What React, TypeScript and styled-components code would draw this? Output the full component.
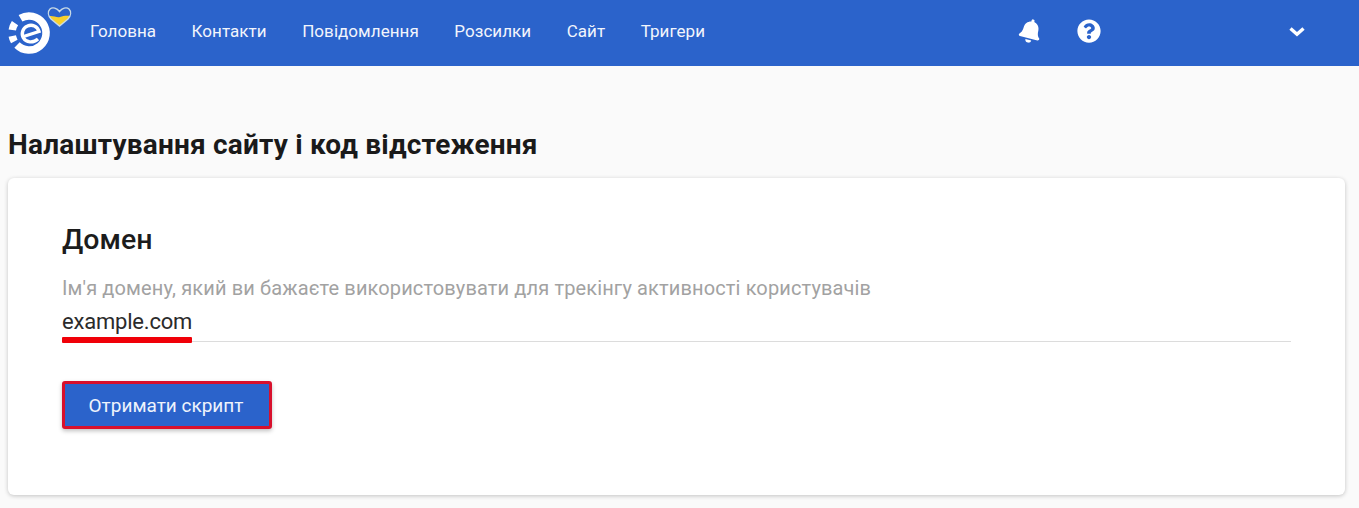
import React from "react";
import styled, {createGlobalStyle} from "styled-components";
import {FaBell} from "react-icons/fa";

const Global = createGlobalStyle`
    html, body {
        margin: 0;
        padding: 0;
        background-color: #fafafa;
        font-family: "Roboto", "Liberation Sans", sans-serif;
    }
    * {
        box-sizing: border-box;
    }
`;

const Page = styled.div`
    width: 1359px;
    height: 508px;
    overflow: hidden;
`;

const Header = styled.header`
    height: 66px;
    background-color: #2b63cb;
    display: flex;
    align-items: center;
    color: #fff;
    padding-bottom: 4px;
`;

const LogoBox = styled.div`
    width: 72px;
    height: 50px;
    margin-left: 8px;
`;

const Nav = styled.nav`
    display: flex;
    gap: 35.5px;
    margin-left: 10px;
    width: 929px;
`;

const NavLink = styled.a`
    font-size: 17px;
    font-weight: 400;
    letter-spacing: 0.05px;
    color: #f2f5fc;
`;

const IconSlot = styled.div<{$width: number}>`
    width: ${({$width}) => $width}px;
    display: flex;
    align-items: center;
`;

const BellIcon = styled(FaBell)`
    width: 23px;
    height: 24px;
    color: #fff;
    transform: rotate(14deg);
`;

const Main = styled.main`
    padding: 64px 14px 0 8px;
`;

const Title = styled.h1`
    margin: 0 0 18px;
    font-size: 28px;
    line-height: 30px;
    font-weight: 700;
    letter-spacing: 0.2px;
    color: #1a1a1a;
`;

const Card = styled.section`
    height: 317px;
    background-color: #fff;
    border-radius: 6px;
    box-shadow: 0 1px 4px rgba(0, 0, 0, 0.22);
    padding: 46px 54px 0;
`;

const CardTitle = styled.h2`
    margin: 0 0 20px;
    font-size: 28.5px;
    line-height: 32px;
    font-weight: 500;
    color: #1c1c1c;
`;

const Hint = styled.div`
    font-size: 20px;
    line-height: 24px;
    color: #a2a2a2;
    letter-spacing: 0.13px;
`;

const InputRow = styled.div`
    margin-top: 7px;
    height: 35px;
    border-bottom: 1px solid #dcdcdc;
    position: relative;
    font-size: 22px;
    letter-spacing: -0.2px;
    line-height: 30px;
    color: #2b2b2b;
`;

const InputValue = styled.span`
    display: inline-block;
    height: 35px;
    position: relative;
`;

const Underline = styled.span`
    position: absolute;
    left: 0;
    right: 0;
    bottom: -1px;
    height: 6px;
    background-color: #f00008;
    border-radius: 1px;
`;

const SubmitButton = styled.button`
    display: block;
    margin-top: 39px;
    width: 210px;
    height: 48px;
    background-color: #2b63cb;
    border: 3px solid #d8102c;
    border-radius: 3px;
    box-shadow: 0 2px 4px rgba(0, 0, 0, 0.25);
    color: #eef3fc;
    font-family: inherit;
    font-size: 19px;
    font-weight: 400;
    padding: 0 2px 0 0;
`;

const heart = "M51.500 5.500 C49 2 44.500 .8 42 3 C39.500 5.500 40 9.500 43 13 L51.500 20 L60 13 C63 9.500 63.500 5.500 61 3 C58.500 .8 54 2 51.500 5.500 Z";

const Logo = () => (
    <svg width="72" height="50" viewBox="0 0 72 50">
        <clipPath id="heart-lower">
            <path d="M38 11 C44 8.500 48 12 52 11 C56 10 60 9 65 11 L65 22 L38 22 Z"/>
        </clipPath>
        <path d={heart} fill="#f7d02c" clipPath="url(#heart-lower)"/>
        <path d={heart} fill="none" stroke="#c9dbe6" strokeWidth="1.400"/>
        <g fill="none" stroke="#fff" strokeWidth="7.500">
            <path d="M12.500 12.300 A17 17 0 1 1 9 39"/>
            <path d="M6.300 35.500 A17 17 0 0 1 4.300 30"/>
            <path d="M4.300 24 A17 17 0 0 1 7 17.200"/>
        </g>
        <path d="M15.500 30.500 L31 25.500 C29.500 20 24 18 19.500 20 C14.500 22 13 28 15.500 32 C18 36.500 25 37.500 30 33" fill="none" stroke="#fff" strokeWidth="3.400"/>
    </svg>
);

const Help = () => (
    <svg width="24" height="24" viewBox="0 0 512 512" fill="#fff">
        <path d="M504 256c0 137-111 248-248 248S8 393 8 256C8 119 119 8 256 8s248 111 248 248zM262.700 90c-54.500 0-89.300 23-116.500 63.800-3.500 5.300-2.400 12.400 2.700 16.300l34.700 26.300c5.200 3.900 12.600 3 16.700-2.100 17.900-22.700 30.100-35.800 57.300-35.800 20.400 0 45.700 13.100 45.700 33 0 15-12.400 22.700-32.600 34-23.600 13.200-54.800 29.700-54.800 70.900V302c0 6.600 5.400 12 12 12h56c6.600 0 12-5.400 12-12v-1.300c0-28.600 83.500-29.800 83.500-107.200C379.400 135.300 318.800 90 262.700 90zM256 339c-25.500 0-46.200 20.700-46.200 46.200 0 25.500 20.700 46.200 46.200 46.200s46.200-20.700 46.200-46.200c0-25.500-20.700-46.200-46.200-46.200z"/>
    </svg>
);

const Chevron = () => (
    <svg width="16" height="11" viewBox="0 0 16 11" fill="none" stroke="#fff" strokeWidth="3.400">
        <path d="M1.500 2.500 L8 8.300 L14.500 2.500"/>
    </svg>
);

const links = ["Головна", "Контакти", "Повідомлення", "Розсилки", "Сайт", "Тригери"];

export default function App() {
    return (
        <Page>
            <Global/>
            <Header>
                <LogoBox><Logo/></LogoBox>
                <Nav>
                    {links.map(link => <NavLink key={link}>{link}</NavLink>)}
                </Nav>
                <IconSlot $width={58}><BellIcon/></IconSlot>
                <IconSlot $width={212}><Help/></IconSlot>
                <IconSlot $width={16}><Chevron/></IconSlot>
            </Header>
            <Main>
                <Title>Налаштування сайту і код відстеження</Title>
                <Card>
                    <CardTitle>Домен</CardTitle>
                    <Hint>Ім'я домену, який ви бажаєте використовувати для трекінгу активності користувачів</Hint>
                    <InputRow>
                        <InputValue>example.com<Underline/></InputValue>
                    </InputRow>
                    <SubmitButton>Отримати скрипт</SubmitButton>
                </Card>
            </Main>
        </Page>
    );
}
